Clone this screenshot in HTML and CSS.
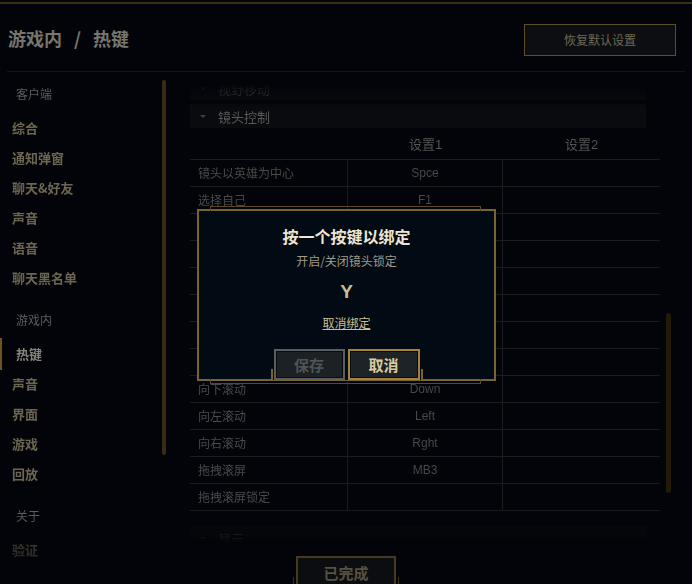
FILE: index.html
```html
<!DOCTYPE html>
<html>
<head>
    <meta charset="utf-8" />
    <title>游戏内 / 热键</title>
    <link rel="stylesheet" href="styles.css">
</head>
<body>
    <div class="app">
        <div class="header">
            <h1 class="title">游戏内<span class="sep">/</span>热键</h1>
            <span class="btn-reset">恢复默认设置</span>
        </div>
        <div class="layout">
            <div class="sidebar">
                <ul class="nav">
                    <li class="nav-label">客户端</li>
                    <li class="nav-item">综合</li>
                    <li class="nav-item">通知弹窗</li>
                    <li class="nav-item">聊天&amp;好友</li>
                    <li class="nav-item">声音</li>
                    <li class="nav-item">语音</li>
                    <li class="nav-item">聊天黑名单</li>
                    <li class="nav-label">游戏内</li>
                    <li class="nav-item active">热键</li>
                    <li class="nav-item">声音</li>
                    <li class="nav-item">界面</li>
                    <li class="nav-item">游戏</li>
                    <li class="nav-item">回放</li>
                    <li class="nav-label">关于</li>
                    <li class="nav-item">验证</li>
                </ul>
                <div class="nav-scroll"></div>
            </div>
            <div class="main">
                <div class="main-scroll">
                    <div class="section first"><i class="caret"></i>视野移动</div>
                    <div class="section"><i class="caret"></i>镜头控制</div>
                    <div class="col-head">
                        <span></span>
                        <span>设置1</span>
                        <span>设置2</span>
                    </div>
                    <div class="table">
                        <div class="row"><span class="name">镜头以英雄为中心</span><span class="key">Spce</span><span></span></div>
                        <div class="row"><span class="name">选择自己</span><span class="key">F1</span><span></span></div>
                        <div class="row"><span class="name">选择队友1</span><span class="key">F2</span><span></span></div>
                        <div class="row"><span class="name">选择队友2</span><span class="key">F3</span><span></span></div>
                        <div class="row"><span class="name">选择队友3</span><span class="key">F4</span><span></span></div>
                        <div class="row"><span class="name">选择队友4</span><span class="key">F5</span><span></span></div>
                        <div class="row"><span class="name">开启/关闭镜头锁定</span><span class="key">Y</span><span></span></div>
                        <div class="row"><span class="name">向上滚动</span><span class="key">Up</span><span></span></div>
                        <div class="row"><span class="name">向下滚动</span><span class="key">Down</span><span></span></div>
                        <div class="row"><span class="name">向左滚动</span><span class="key">Left</span><span></span></div>
                        <div class="row"><span class="name">向右滚动</span><span class="key">Rght</span><span></span></div>
                        <div class="row"><span class="name">拖拽滚屏</span><span class="key">MB3</span><span></span></div>
                        <div class="row"><span class="name">拖拽滚屏锁定</span><span class="key"></span><span></span></div>
                    </div>
                    <div class="section last"><i class="caret"></i>显示</div>
                </div>
                <span class="btn-done">已完成</span>
            </div>
            <div class="main-bar"></div>
        </div>

        <div class="modal">
            <h2 class="modal-title">按一个按键以绑定</h2>
            <p class="modal-sub">开启/关闭镜头锁定</p>
            <p class="modal-key">Y</p>
            <a class="modal-link">取消绑定</a>
            <div class="modal-actions">
                <span class="btn-save">保存</span>
                <span class="btn-cancel">取消</span>
            </div>
        </div>
    </div>
</body>
</html>
```

FILE: styles.css
```css
* {
    margin: 0;
    padding: 0;
    box-sizing: border-box;
}

html, body {
    width: 100%;
    height: 100%;
}

body {
    background: #030409;
    font-family: "Liberation Sans", "Noto Sans CJK SC", sans-serif;
    padding-top: 2px;
    overflow: hidden;
}

.app {
    position: relative;
    height: 582px;
    border-top: 2px solid #3a2e15;
}

/* header */
.header {
    display: flex;
    justify-content: space-between;
    align-items: flex-start;
    height: 68px;
    margin: 0 7px;
    padding: 20px 9px 0 1px;
    border-bottom: 1px solid #11161d;
}

.title {
    margin-top: 2px;
    font-family: "Noto Sans CJK SC", sans-serif;
    font-size: 18px;
    line-height: 24px;
    font-weight: bold;
    color: #77766f;
}

    .title .sep {
        margin: 0 12px;
    }

.btn-reset {
    width: 152px;
    height: 32px;
    line-height: 30px;
    text-align: center;
    border: 1px solid #5e4d2a;
    background: #0d0e12;
    color: #6f6853;
    font-family: "Noto Sans CJK SC", sans-serif;
    font-size: 12px;
}

/* layout */
.layout {
    display: flex;
    height: 512px;
}

.sidebar {
    display: flex;
    width: 190px;
    flex-shrink: 0;
}

.nav {
    list-style: none;
    width: 162px;
    padding-top: 7px;
    font-family: "Noto Sans CJK SC", sans-serif;
    -webkit-mask-image: linear-gradient(to bottom, #000 440px, transparent 100%);
    mask-image: linear-gradient(to bottom, #000 440px, transparent 100%);
}

.nav-label {
    padding-left: 16px;
    margin: 12px 0 4px;
    font-size: 12px;
    line-height: 30px;
    color: #5e5e5e;
}

    .nav-label:first-child {
        margin-top: 0;
    }

.nav-item {
    position: relative;
    padding-left: 12px;
    font-size: 13px;
    line-height: 30px;
    font-weight: bold;
    color: #6c6651;
}

    .nav-item.active {
        padding-left: 16px;
        color: #85847e;
    }

        .nav-item.active::before {
            content: "";
            position: absolute;
            left: 0;
            top: -1px;
            bottom: -1px;
            width: 2px;
            background: #6b5428;
        }

.nav-scroll {
    width: 4px;
    height: 375px;
    margin-top: 8px;
    border-radius: 2px;
    background: #3a2b16;
}

/* main */
.main {
    display: flex;
    flex-direction: column;
    align-items: flex-start;
    width: 470px;
    flex-shrink: 0;
}

.main-scroll {
    flex-shrink: 0;
    width: 470px;
    height: 468px;
    margin-top: 8px;
    overflow: hidden;
    -webkit-mask-image: linear-gradient(to bottom, transparent 4px, #000 30px, #000 calc(100% - 40px), transparent calc(100% - 4px));
    mask-image: linear-gradient(to bottom, transparent 4px, #000 30px, #000 calc(100% - 40px), transparent calc(100% - 4px));
}

.section {
    display: flex;
    align-items: center;
    width: 456px;
    height: 24px;
    margin-top: 4px;
    background: #0a0b0f;
    font-family: "Noto Sans CJK SC", sans-serif;
    font-size: 13px;
    color: #595959;
}

    .section.first {
        margin-top: -4px;
    }

    .section.last {
        margin-top: 15px;
    }

.caret {
    width: 0;
    height: 0;
    margin: 0 12px 0 10px;
    border-left: 3px solid transparent;
    border-right: 3px solid transparent;
    border-top: 3px solid #3e3e3e;
}

.col-head,
.row {
    display: grid;
    grid-template-columns: 158px 155px 157px;
}

.col-head {
    padding: 9px 0 6px;
    font-size: 13px;
    line-height: 16px;
    color: #555555;
    text-align: center;
}

.table {
    border-top: 1px solid #1b1c20;
}

.row {
    height: 27px;
    border-bottom: 1px solid #1b1c20;
    font-size: 12px;
    line-height: 26px;
}

    .row .name {
        padding-left: 8px;
        border-right: 1px solid #1b1c20;
        font-family: "Noto Sans CJK SC", sans-serif;
        color: #4a4a4a;
    }

    .row .key {
        text-align: center;
        border-right: 1px solid #1b1c20;
        color: #484848;
    }

.btn-done {
    position: relative;
    flex-shrink: 0;
    width: 100px;
    height: 36px;
    margin: 8px 0 0 106px;
    border: 2px solid #46391f;
    background: #0c0d10;
    text-align: center;
    font-family: "Noto Sans CJK SC", sans-serif;
    font-size: 15px;
    line-height: 30px;
    font-weight: bold;
    color: #57513f;
}

    .btn-done::before,
    .btn-done::after {
        content: "";
        position: absolute;
        top: 19px;
        width: 1px;
        height: 14px;
        background: #3a2f19;
    }

    .btn-done::before {
        left: -5px;
    }

    .btn-done::after {
        right: -5px;
    }

.main-bar {
    width: 5px;
    height: 180px;
    margin: 241px 0 0 6px;
    border-radius: 3px;
    background: #221909;
}

/* modal */
.modal {
    position: absolute;
    left: 197px;
    top: 205px;
    width: 299px;
    height: 172px;
    display: flex;
    flex-direction: column;
    align-items: center;
    padding-top: 15px;
    border: 2px solid #7a632f;
    background: #020a13;
    font-family: "Noto Sans CJK SC", sans-serif;
}

    .modal::before,
    .modal::after {
        content: "";
        position: absolute;
        left: 11px;
        right: 13px;
        height: 4px;
        border: 1px solid #5b4a25;
    }

    .modal::before {
        top: -5px;
        border-bottom: none;
    }

    .modal::after {
        bottom: -5px;
        border-top: none;
    }

.modal-title {
    font-size: 16px;
    line-height: 20px;
    font-weight: bold;
    color: #eee6d3;
}

.modal-sub {
    margin-top: 7px;
    font-size: 12px;
    line-height: 16px;
    color: #9f998a;
}

.modal-key {
    margin-top: 11px;
    font-family: "Liberation Sans", sans-serif;
    font-size: 19px;
    line-height: 24px;
    font-weight: bold;
    color: #cbbd8d;
}

.modal-link {
    margin-top: 11px;
    font-size: 12px;
    line-height: 16px;
    color: #cdbf91;
    text-decoration: underline;
}

.modal-actions {
    position: relative;
    z-index: 1;
    display: flex;
    gap: 3px;
    margin-top: 18px;
    padding: 0 3px;
    background: #020a13;
}

    .modal-actions::before,
    .modal-actions::after {
        content: "";
        position: absolute;
        bottom: 0;
        width: 2px;
        height: 11px;
        background: #7a632f;
    }

    .modal-actions::before {
        left: 0;
    }

    .modal-actions::after {
        right: 0;
    }

.btn-save,
.btn-cancel {
    height: 31px;
    text-align: center;
    font-size: 15px;
    line-height: 27px;
    font-weight: bold;
    box-shadow: inset 0 0 0 1px #0a0c0e;
}

.btn-save {
    width: 71px;
    border: 2px solid #5b5e61;
    background: #1c2125;
    color: #505356;
}

.btn-cancel {
    width: 72px;
    border: 2px solid #a3823f;
    background: #1d2327;
    color: #d9cb9f;
}
```
